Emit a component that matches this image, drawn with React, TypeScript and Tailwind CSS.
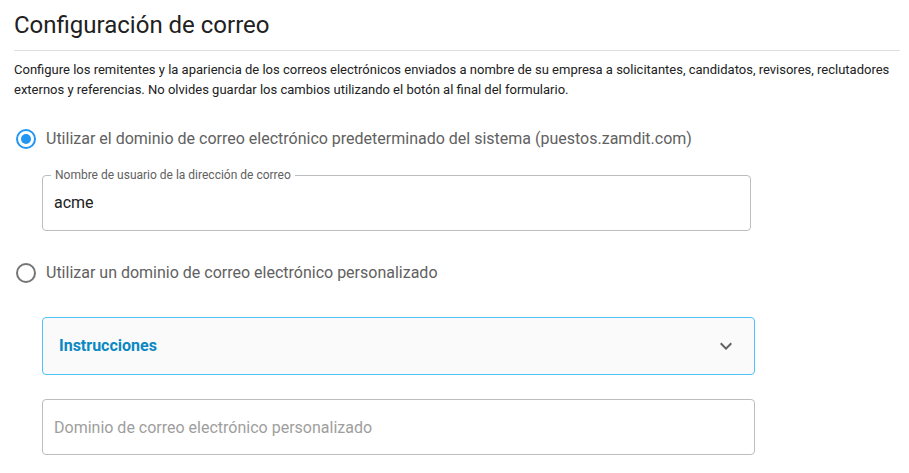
import React, { useState } from 'react';

const App: React.FC = () => {
    const [mode, setMode] = useState<'system' | 'custom'>('system');
    const [open, setOpen] = useState(false);

    return (
        <div className="min-h-screen bg-white pl-[14px] pr-[9px] pt-[10px] font-['Roboto',sans-serif] text-[#212121]">
            <h1 className="text-[24px] leading-[30px] font-normal">Configuración de correo</h1>
            <hr className="mt-[10px] border-t border-[#e0e0e0]" />

            <p className="mt-[9px] text-[13px] leading-[19.5px] text-[#212121]">
                Configure los remitentes y la apariencia de los correos electrónicos enviados a nombre de su empresa a solicitantes, candidatos, revisores, reclutadores externos y referencias. No olvides guardar los cambios utilizando el botón al final del formulario.
            </p>

            {/* opción del sistema */}
            <label className="mt-[28px] flex items-center gap-[8px] cursor-pointer" onClick={() => setMode('system')}>
                <Radio checked={mode === 'system'} />
                <span className="text-[16px] leading-[24px] text-[#616161]">
                    Utilizar el dominio de correo electrónico predeterminado del sistema (puestos.zamdit.com)
                </span>
            </label>

            <fieldset className="ml-[28px] mt-[18px] w-[709px] h-[62px] border border-[#bdbdbd] rounded-[4px] px-[8px] pb-[8px]">
                <legend className="px-[4px] text-[12px] leading-[12px] text-[#616161]">Nombre de usuario de la dirección de correo</legend>
                <input
                    defaultValue="acme"
                    className="w-full pl-[3px] pt-[10px] text-[16px] leading-[24px] text-[#212121] outline-none bg-transparent"
                />
            </fieldset>

            {/* opción personalizada */}
            <label className="mt-[30px] flex items-center gap-[8px] cursor-pointer" onClick={() => setMode('custom')}>
                <Radio checked={mode === 'custom'} />
                <span className="text-[16px] leading-[24px] text-[#616161]">
                    Utilizar un dominio de correo electrónico personalizado
                </span>
            </label>

            <div className="ml-[28px] mt-[32px] w-[713px]">
                <button
                    onClick={() => setOpen(!open)}
                    className="w-full h-[58px] flex items-center justify-between px-[16px] bg-[#fafafa] border border-[#4fc3f7] rounded-[4px]"
                >
                    <span className="text-[16px] font-bold text-[#0a88c2]">Instrucciones</span>
                    <svg width="24" height="24" viewBox="0 0 24 24" className={open ? 'rotate-180' : ''}>
                        <path d="M7.41 8.59 12 13.17l4.59-4.58L18 10l-6 6-6-6z" fill="#616161" />
                    </svg>
                </button>

                <input
                    placeholder="Dominio de correo electrónico personalizado"
                    className="mt-[24px] w-full h-[56px] px-[11px] border border-[#bdbdbd] rounded-[4px] text-[16px] text-[#212121] placeholder:text-[#9e9e9e] outline-none"
                />
            </div>
        </div>
    );
};

const Radio: React.FC<{ checked: boolean }> = ({ checked }) => (
    <span className="w-[24px] h-[24px] flex items-center justify-center shrink-0">
        <span className={`w-[20px] h-[20px] rounded-full border-2 flex items-center justify-center ${checked ? 'border-[#2196f3]' : 'border-[#757575]'}`}>
            {checked && <span className="w-[10px] h-[10px] rounded-full bg-[#2196f3]" />}
        </span>
    </span>
);

export default App;
